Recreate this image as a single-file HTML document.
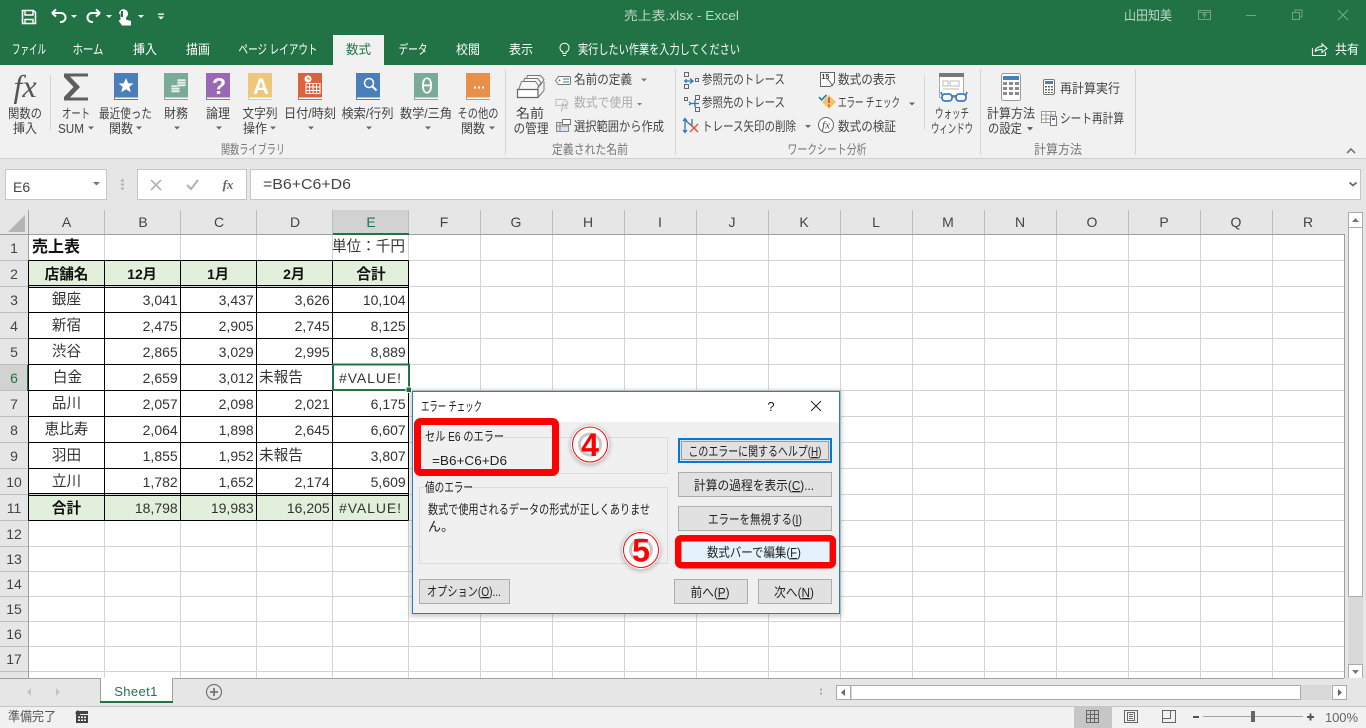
<!DOCTYPE html>
<html lang="ja"><head><meta charset="utf-8"><title>売上表.xlsx - Excel</title>
<style>
html,body{margin:0;padding:0;width:1366px;height:728px;overflow:hidden;background:#e6e6e6}
svg{display:block}
text{font-family:"Liberation Sans","Noto Sans CJK JP",sans-serif;font-size:13px;fill:#444}
.r{font-size:13px;fill:#444}
.g{font-size:13px;fill:#777}
.m{text-anchor:middle}
.e{text-anchor:end}
.tab{font-size:13px;fill:#fff;text-anchor:middle}
.c{font-size:14px;fill:#333}
.j{font-size:14.6px;fill:#333}
.b{font-weight:bold;fill:#111}
.h{font-size:14px;fill:#444;text-anchor:middle}
.d{font-size:13px;fill:#222}
.dm{font-size:13px;fill:#222;text-anchor:middle}
</style></head><body>
<svg width="1366" height="728" viewBox="0 0 1366 728" xmlns="http://www.w3.org/2000/svg">
<defs><filter id="s" x="-30%" y="-30%" width="160%" height="160%"><feGaussianBlur stdDeviation="2"/></filter></defs>
<!-- backgrounds -->
<rect width="1366" height="728" fill="#e6e6e6"/>
<rect width="1366" height="65" fill="#217346"/>
<rect y="65" width="1366" height="93" fill="#f1f1f1"/>
<rect y="158" width="1366" height="1" fill="#d0d0d0"/>
<!-- QAT -->
<g fill="none" stroke="#fff">
<path d="M22.500 10.500h11l2 2v11h-13z" stroke-width="1.600"/>
<path d="M25 11v4h8v-4M25 23.500v-4h8v4" stroke-width="1.400"/>
<path d="M52 13l4-3.500M52 13l4 3.500M52 13h9a4.500 4.500 0 0 1 0 9h-1" stroke-width="2"/>
<path d="M100 13l-4-3.500M100 13l-4 3.500M100 13h-8a4.500 4.500 0 0 0 0 9h1" stroke-width="2"/>
</g>
<g fill="#fff">
<path d="M71 15h6l-3 3zM106 15h6l-3 3zM138 15h6l-3 3z"/>
<path d="M119 14a4.500 4.500 0 1 1 7 3.500v2l5 1.500v4.500h-9l-3.500-5 2-.5V13.500z"/>
<rect x="158" y="13.500" width="6" height="1.300"/><path d="M158 16.500h6l-3 3z"/>
</g>
<rect x="121" y="11" width="2" height="6" fill="#217346"/>
<!-- title -->
<text x="681.500" y="20" class="m" style="font-size:12.500px;fill:#bcd8c8" textLength="115" lengthAdjust="spacingAndGlyphs">売上表.xlsx  -  Excel</text>
<text x="1124" y="20" style="font-size:13px;fill:#bcd8c8" textLength="48" lengthAdjust="spacingAndGlyphs">山田知美</text>
<g fill="none" stroke="#6fa488">
<path d="M1198.500 10.500h12v9h-12zM1198.500 12.500h12M1204.500 18v-4M1202.500 15.500l2-2 2 2"/>
<path d="M1246 15.500h10"/>
<path d="M1292.500 12.500h7v7h-7zM1295 12.500v-2.500h7v7h-2.500"/>
<path d="M1338 10l10 10M1348 10l-10 10" stroke-width="1.200"/>
</g>
<!-- tabs -->
<rect x="333" y="35" width="51" height="30" fill="#f1f1f1"/>
<text x="29" y="54" class="tab" textLength="34" lengthAdjust="spacingAndGlyphs">ファイル</text>
<text x="88" y="54" class="tab" textLength="31" lengthAdjust="spacingAndGlyphs">ホーム</text>
<text x="145" y="54" class="tab" textLength="24" lengthAdjust="spacingAndGlyphs">挿入</text>
<text x="198" y="54" class="tab" textLength="24" lengthAdjust="spacingAndGlyphs">描画</text>
<text x="278" y="54" class="tab" textLength="79" lengthAdjust="spacingAndGlyphs">ページ レイアウト</text>
<text x="358.500" y="54" class="tab" style="fill:#217346" textLength="25" lengthAdjust="spacingAndGlyphs">数式</text>
<text x="413" y="54" class="tab" textLength="29" lengthAdjust="spacingAndGlyphs">データ</text>
<text x="468" y="54" class="tab" textLength="24" lengthAdjust="spacingAndGlyphs">校閲</text>
<text x="521" y="54" class="tab" textLength="24" lengthAdjust="spacingAndGlyphs">表示</text>
<path d="M566 53.500v-1.500a4.500 4.500 0 1 0-3 0v1.500zM563 55.500h3" fill="none" stroke="#fff"/>
<text x="578" y="54" style="font-size:13px;fill:#fff" textLength="162" lengthAdjust="spacingAndGlyphs">実行したい作業を入力してください</text>
<path d="M1312.500 48v7.500h13V52M1315 51c1-3.500 4-4.500 7-4.500V44l5 4.500-5 4v-3c-3 0-5 .5-7 2" fill="none" stroke="#fff" stroke-width="1.100"/>
<text x="1335" y="54" style="font-size:13px;fill:#fff" textLength="24" lengthAdjust="spacingAndGlyphs">共有</text>

<!-- ribbon: function library -->
<text x="25" y="97" class="m" style="font-family:'Liberation Serif',serif;font-style:italic;font-size:32px;fill:#555">fx</text>
<rect x="50" y="75" width="1" height="55" fill="#d4d4d4"/>
<path d="M64 73.500h24v3H70l10 10.500-10 10.500h18v3H64v-3.500l9.500-10-9.500-10z" fill="#5f5f5f"/>
<!-- books -->
<g>
<path d="M114 73h24v26h-24z" fill="#4a7fb9"/><rect x="114" y="99" width="24" height="1" fill="#4a7fb9"/><rect x="115" y="97.500" width="23" height="1.500" fill="#fff"/>
<path d="M126 78l2.200 5.200 5.300.3-4.200 3.400 1.500 5.300-4.800-3-4.800 3 1.500-5.300-4.200-3.400 5.300-.3z" fill="#fff"/>
<path d="M164 73h24v26h-24z" fill="#7aab98"/><rect x="164" y="99" width="24" height="1" fill="#7aab98"/><rect x="165" y="97.500" width="23" height="1.500" fill="#fff"/>
<g fill="#e8efec" stroke="#7aab98" stroke-width=".5"><rect x="171" y="85" width="9" height="2.500" rx="1"/><rect x="171" y="87.500" width="9" height="2.500" rx="1"/><rect x="171" y="90" width="9" height="2.500" rx="1"/><rect x="177" y="79" width="9" height="2.500" rx="1"/><rect x="177" y="81.500" width="9" height="2.500" rx="1"/><rect x="177" y="84" width="9" height="2.500" rx="1"/></g>
<path d="M206 73h24v26h-24z" fill="#9a68b5"/><rect x="206" y="99" width="24" height="1" fill="#9a68b5"/><rect x="207" y="97.500" width="23" height="1.500" fill="#fff"/>
<text x="219" y="94" class="m" style="font-size:23px;font-weight:bold;fill:#fff">?</text>
<path d="M248 73h24v26h-24z" fill="#eec77d"/><rect x="248" y="99" width="24" height="1" fill="#eec77d"/><rect x="249" y="97.500" width="23" height="1.500" fill="#fff"/>
<text x="261" y="94" class="m" style="font-size:22px;font-weight:bold;fill:#fff">A</text>
<path d="M298 73h24v26h-24z" fill="#d9623f"/><rect x="298" y="99" width="24" height="1" fill="#d9623f"/><rect x="299" y="97.500" width="23" height="1.500" fill="#fff"/>
<circle cx="308" cy="79" r="3.500" fill="#fff"/><path d="M308 77v2h2" stroke="#d9623f" fill="none"/>
<path d="M306 83.500h14v10h-14zM306 87h14M306 90.500h14M309.500 83.500v10M313 83.500v10M316.500 83.500v10" fill="none" stroke="#fff"/>
<path d="M356 73h24v26h-24z" fill="#4a7fb9"/><rect x="356" y="99" width="24" height="1" fill="#4a7fb9"/><rect x="357" y="97.500" width="23" height="1.500" fill="#fff"/>
<circle cx="369" cy="83" r="4.500" fill="none" stroke="#fff" stroke-width="1.500"/><path d="M372.500 86.500l4 4" stroke="#fff" stroke-width="2"/>
<path d="M414 73h24v26h-24z" fill="#7aab98"/><rect x="414" y="99" width="24" height="1" fill="#7aab98"/><rect x="415" y="97.500" width="23" height="1.500" fill="#fff"/>
<text x="427" y="93" class="m" style="font-size:20px;fill:#fff;font-family:'DejaVu Sans',sans-serif">θ</text>
<path d="M466 73h24v26h-24z" fill="#e8904a"/><rect x="466" y="99" width="24" height="1" fill="#e8904a"/><rect x="467" y="97.500" width="23" height="1.500" fill="#fff"/>
<path d="M474 86.500h2v2h-2zM478 86.500h2v2h-2zM482 86.500h2v2h-2z" fill="#fff"/>
</g>
<g class="r">
<text x="25" y="118" class="r m" textLength="34" lengthAdjust="spacingAndGlyphs">関数の</text>
<text x="25" y="133" class="r m" textLength="24" lengthAdjust="spacingAndGlyphs">挿入</text>
<text x="76" y="118" class="r m" textLength="28" lengthAdjust="spacingAndGlyphs">オート</text>
<text x="58" y="133" class="r" textLength="26" lengthAdjust="spacingAndGlyphs">SUM</text>
<text x="125.500" y="118" class="r m" textLength="53" lengthAdjust="spacingAndGlyphs">最近使った</text>
<text x="121" y="133" class="r m" textLength="24" lengthAdjust="spacingAndGlyphs">関数</text>
<text x="176" y="118" class="r m" textLength="24" lengthAdjust="spacingAndGlyphs">財務</text>
<text x="218" y="118" class="r m" textLength="24" lengthAdjust="spacingAndGlyphs">論理</text>
<text x="260" y="118" class="r m" textLength="35" lengthAdjust="spacingAndGlyphs">文字列</text>
<text x="255" y="133" class="r m" textLength="24" lengthAdjust="spacingAndGlyphs">操作</text>
<text x="310" y="118" class="r m" textLength="52" lengthAdjust="spacingAndGlyphs">日付/時刻</text>
<text x="367.500" y="118" class="r m" textLength="52" lengthAdjust="spacingAndGlyphs">検索/行列</text>
<text x="426" y="118" class="r m" textLength="52" lengthAdjust="spacingAndGlyphs">数学/三角</text>
<text x="478" y="118" class="r m" textLength="41" lengthAdjust="spacingAndGlyphs">その他の</text>
<text x="473" y="133" class="r m" textLength="24" lengthAdjust="spacingAndGlyphs">関数</text>
</g>
<g fill="#666">
<path d="M88 126.500h6l-3 3zM136 126.500h6l-3 3zM174 126.500h6l-3 3zM216 126.500h6l-3 3zM270 126.500h6l-3 3zM308 126.500h6l-3 3zM366 126.500h6l-3 3zM425 126.500h6l-3 3zM489 126.500h6l-3 3z"/>
<path d="M641 78.500h6l-3 3zM637 103h5l-2.500 2.500z" opacity=".85"/>
<path d="M805 125h6l-3 3zM909 102.500h6l-3 3zM1027 127.500h6l-3 3z"/>
</g>
<text x="253" y="154" class="g m" textLength="64" lengthAdjust="spacingAndGlyphs">関数ライブラリ</text>
<rect x="505" y="69" width="1" height="86" fill="#d6d6d6"/>

<!-- defined names -->
<g fill="#f7f7f7" stroke="#777">
<path d="M527.500 75.500h13l3.500 4-4 6h-16z"/>
<path d="M524.500 78.500h13l3.500 4-3 6h-16z"/>
<path d="M521.500 81.500h14l3 4-1 4.500h-19z"/>
<path d="M517.500 89.500h20.500v8h-20.500z" fill="#fff" stroke="#666" stroke-width="1.200"/>
<path d="M538 97.500l6-7v-9" fill="none"/>
</g>
<text x="530" y="118" class="r m" textLength="28" lengthAdjust="spacingAndGlyphs">名前</text>
<text x="531" y="133" class="r m" textLength="35" lengthAdjust="spacingAndGlyphs">の管理</text>
<path d="M558.500 76.500h11a2 2 0 0 1 1 1v6a2 2 0 0 1-1 1h-11l-3-4z" fill="#fff" stroke="#777"/>
<path d="M563 79h6M563 82h6" stroke="#2d76b8"/><circle cx="559.500" cy="80.500" r="1" fill="#777"/>
<text x="574" y="84" class="r" textLength="58" lengthAdjust="spacingAndGlyphs">名前の定義</text>
<text x="561" y="109" style="font-size:10px;font-style:italic;font-family:'Liberation Serif',serif;fill:#aaa">fx</text>
<path d="M556 99.500h9l3 3-3 3h-9z" fill="none" stroke="#bbb"/>
<text x="574" y="107" style="font-size:13px;fill:#aaa" textLength="59" lengthAdjust="spacingAndGlyphs">数式で使用</text>
<path d="M556.500 122.500h12v9h-12z" fill="#dbe5f0" stroke="#888"/><path d="M560 122.500v9M556.500 126h12" stroke="#888"/><path d="M562.500 119.500h8v5h-8z" fill="#fff" stroke="#777"/>
<text x="574" y="131" class="r" textLength="90" lengthAdjust="spacingAndGlyphs">選択範囲から作成</text>
<text x="590" y="154" class="g m" textLength="76" lengthAdjust="spacingAndGlyphs">定義された名前</text>
<rect x="675" y="69" width="1" height="86" fill="#d6d6d6"/>

<!-- formula auditing -->
<g fill="none" stroke="#666">
<path d="M684.500 72.500h4v4h-4zM684.500 84.500h4v4h-4zM695.500 78.500h3v3h-3z"/>
<path d="M684 81h9M690 78.500l3 2.500-3 2.500M686 79v4" stroke="#2d76b8" stroke-width="1.300"/>
<path d="M684.500 97.500h3v3h-3zM695.500 95.500h4v4h-4zM695.500 107.500h4v4h-4z"/>
<path d="M691 103.500h8M695 100v7M689 102l2 1.500-2 1.500" stroke="#2d76b8" stroke-width="1.300"/>
<path d="M685 119v13M683 121l2-2.500 2 2.500M683 130l2 2.500 2-2.500M685 120l8 7M692 119v7" stroke="#2d76b8" stroke-width="1.300"/>
<path d="M690 124l8 8M698 124l-8 8" stroke="#d9533a" stroke-width="1.400"/>
</g>
<text x="702" y="84" class="r" textLength="83" lengthAdjust="spacingAndGlyphs">参照元のトレース</text>
<text x="702" y="107" class="r" textLength="83" lengthAdjust="spacingAndGlyphs">参照先のトレース</text>
<text x="702" y="131" class="r" textLength="94" lengthAdjust="spacingAndGlyphs">トレース矢印の削除</text>
<path d="M820.500 72.500h14v10l-4 4h-10z" fill="#fff" stroke="#666"/><path d="M827 78l6 8" stroke="#666"/>
<text x="821.500" y="79" style="font-size:7px;fill:#333;font-weight:bold">15</text>
<text x="838" y="84" class="r" textLength="58" lengthAdjust="spacingAndGlyphs">数式の表示</text>
<path d="M819 97l2.500 3 5-5" fill="none" stroke="#2d76b8" stroke-width="1.600"/>
<path d="M829 95l7 7-7 7-7-7z" fill="#f0c36d"/><path d="M829 97.500v5.500M829 104.500v2" stroke="#d9533a" stroke-width="1.800"/>
<text x="838" y="107" class="r" textLength="62" lengthAdjust="spacingAndGlyphs">エラー チェック</text>
<circle cx="826" cy="125" r="7.500" fill="#fff" stroke="#666"/>
<text x="826" y="128.500" class="m" style="font-size:11px;font-style:italic;font-family:'Liberation Serif',serif;fill:#444">fx</text>
<text x="838" y="131" class="r" textLength="58" lengthAdjust="spacingAndGlyphs">数式の検証</text>
<text x="827" y="154" class="g m" textLength="79" lengthAdjust="spacingAndGlyphs">ワークシート分析</text>
<rect x="924" y="75" width="1" height="55" fill="#d8d8d8"/>
<!-- watch window -->
<rect x="939.500" y="73.500" width="24" height="24" fill="#fff" stroke="#aaa"/>
<rect x="939" y="73" width="25" height="4" fill="#777"/>
<path d="M943 81h5v5h-5zM950 81h9v5h-9zM943 89h16" stroke="#bbb" fill="none"/>
<g fill="#f7f7f7" stroke="#3f7cbb" stroke-width="1.700"><rect x="942" y="94" width="10" height="7" rx="3"/><rect x="956" y="94" width="10" height="7" rx="3"/><path d="M952 96h4M942 95l-1-3M966 95l1-3" fill="none"/></g>
<text x="952" y="118" class="r m" textLength="34" lengthAdjust="spacingAndGlyphs">ウォッチ</text>
<text x="952" y="133" class="r m" textLength="42" lengthAdjust="spacingAndGlyphs">ウィンドウ</text>
<rect x="980" y="69" width="1" height="86" fill="#d6d6d6"/>
<!-- calc -->
<rect x="1001.500" y="73.500" width="19" height="27" rx="2" fill="#fff" stroke="#999"/>
<rect x="1003" y="76" width="16" height="4" fill="#4a7fb9"/>
<g fill="#8a8a8a"><rect x="1003" y="82" width="4" height="3"/><rect x="1009" y="82" width="4" height="3"/><rect x="1015" y="82" width="4" height="3"/><rect x="1003" y="87" width="4" height="3"/><rect x="1009" y="87" width="4" height="3"/><rect x="1015" y="87" width="4" height="3"/><rect x="1003" y="92" width="4" height="3"/><rect x="1009" y="92" width="4" height="3"/><rect x="1015" y="92" width="4" height="3"/></g>
<text x="1011" y="118" class="r m" textLength="48" lengthAdjust="spacingAndGlyphs">計算方法</text>
<text x="1005" y="133" class="r m" textLength="34" lengthAdjust="spacingAndGlyphs">の設定</text>
<path d="M1027.500 127h5l-2.500 2.500z" fill="#666"/>
<rect x="1043.500" y="79.500" width="11" height="15" rx="1.500" fill="#fff" stroke="#777"/><rect x="1045" y="81" width="8" height="3" fill="#4a7fb9"/>
<path d="M1045 86h2v1.500h-2zM1048 86h2v1.500h-2zM1051 86h2v1.500h-2zM1045 89h2v1.500h-2zM1048 89h2v1.500h-2zM1051 89h2v1.500h-2zM1045 92h2v1h-2zM1048 92h2v1h-2zM1051 92h2v1h-2z" fill="#666"/>
<text x="1060" y="93" class="r" textLength="60" lengthAdjust="spacingAndGlyphs">再計算実行</text>
<path d="M1041.500 111.500h14v11h-14zM1041.500 115h14M1041.500 119h14M1046 111.500v11M1051 111.500v11" fill="#fff" stroke="#999"/>
<rect x="1050.500" y="116.500" width="6" height="9" fill="#fff" stroke="#777"/><rect x="1052" y="118" width="3" height="2" fill="#4a7fb9"/>
<text x="1060" y="123" class="r" textLength="64" lengthAdjust="spacingAndGlyphs">シート再計算</text>
<text x="1058" y="154" class="g m" textLength="48" lengthAdjust="spacingAndGlyphs">計算方法</text>
<rect x="1135" y="69" width="1" height="86" fill="#d6d6d6"/>
<path d="M1347 153l4-4 4 4" fill="none" stroke="#777" stroke-width="1.600"/>

<!-- formula bar -->
<rect x="5.500" y="169.500" width="101" height="30" fill="#fff" stroke="#c6c6c6"/>
<text x="13" y="192" style="font-size:14px;fill:#444">E6</text>
<path d="M93 182h7l-3.500 3.500z" fill="#777"/>
<path d="M121 179.500h3v2h-3zM121 183.500h3v2h-3zM121 187.500h3v2h-3z" fill="#b0b0b0"/>
<rect x="137.500" y="169.500" width="109" height="30" fill="#fff" stroke="#c6c6c6"/>
<path d="M151 180l10 10M161 180l-10 10" stroke="#b4b4b4" stroke-width="1.700" fill="none"/>
<path d="M187 185l4 4 7-9" stroke="#b4b4b4" stroke-width="2.200" fill="none"/>
<text x="228" y="189" class="m" style="font-family:'Liberation Serif',serif;font-style:italic;font-size:13px;font-weight:bold;fill:#666">fx</text>
<rect x="250.500" y="169.500" width="1110" height="30" fill="#fff" stroke="#c6c6c6"/>
<text x="263" y="189" style="font-size:14.500px;fill:#444" textLength="88" lengthAdjust="spacingAndGlyphs">=B6+C6+D6</text>
<path d="M1349.500 182.500l3.500 3 3.500-3" fill="none" stroke="#666" stroke-width="1.800"/>

<!-- sheet -->
<rect x="29" y="235" width="1315" height="443" fill="#fff"/>
<rect x="333" y="210" width="76" height="24" fill="#d2d2d2"/>
<rect x="0" y="365" width="28" height="26" fill="#d2d2d2"/>
<path d="M8 232h17v-17z" fill="#b4b4b4"/>
<!-- header separators -->
<path d="M28.500 210v25M104.500 210v25M180.500 210v25M256.500 210v25M332.500 210v25M408.500 210v25M480.500 210v25M552.500 210v25M624.500 210v25M696.500 210v25M768.500 210v25M840.500 210v25M912.500 210v25M984.500 210v25M1056.500 210v25M1128.500 210v25M1200.500 210v25M1272.500 210v25" stroke="#bdbdbd"/>
<path d="M0 260.500h28M0 286.500h28M0 312.500h28M0 338.500h28M0 364.500h28M0 390.500h28M0 416.500h28M0 442.500h28M0 468.500h28M0 494.500h28M0 520.500h28M0 546.500h28M0 571.500h28M0 596.500h28M0 621.500h28M0 646.500h28M0 671.500h28" stroke="#bdbdbd"/>
<!-- gridlines -->
<path d="M104.500 235V678M180.500 235V678M256.500 235V678M332.500 235V678M408.500 235V678M480.500 235V678M552.500 235V678M624.500 235V678M696.500 235V678M768.500 235V678M840.500 235V678M912.500 235V678M984.500 235V678M1056.500 235V678M1128.500 235V678M1200.500 235V678M1272.500 235V678" stroke="#d4d4d4"/>
<path d="M29 260.500H1344M29 286.500H1344M29 312.500H1344M29 338.500H1344M29 364.500H1344M29 390.500H1344M29 416.500H1344M29 442.500H1344M29 468.500H1344M29 494.500H1344M29 520.500H1344M29 546.500H1344M29 571.500H1344M29 596.500H1344M29 621.500H1344M29 646.500H1344M29 671.500H1344" stroke="#d4d4d4"/>
<path d="M28.500 210V678M0 234.500H1344M1344.500 234V678" stroke="#9f9f9f"/>
<rect x="333" y="233" width="76" height="2" fill="#217346"/>
<rect x="27" y="365" width="2" height="26" fill="#217346"/>
<!-- table -->
<rect x="29" y="261" width="380" height="24" fill="#e2efda"/>
<rect x="29" y="495" width="380" height="25" fill="#e2efda"/>
<path d="M28.500 260.500V520.500M104.500 260.500V520.500M180.500 260.500V520.500M256.500 260.500V520.500M332.500 260.500V520.500M408.500 260.500V520.500M28.500 260.500H408.500M28.500 285.500H408.500M28.500 287.500H408.500M28.500 312.500H408.500M28.500 338.500H408.500M28.500 364.500H408.500M28.500 390.500H408.500M28.500 416.500H408.500M28.500 442.500H408.500M28.500 468.500H408.500M28.500 493.500H408.500M28.500 495.500H408.500M28.500 520.500H408.500" stroke="#000" fill="none"/>
<!-- headers -->
<g class="h">
<text x="66.500" y="227" class="h">A</text><text x="143" y="227" class="h">B</text><text x="219" y="227" class="h">C</text><text x="295" y="227" class="h">D</text><text x="371" y="227" class="h" style="fill:#217346">E</text>
<text x="444" y="227" class="h">F</text><text x="516" y="227" class="h">G</text><text x="588" y="227" class="h">H</text><text x="660" y="227" class="h">I</text><text x="732" y="227" class="h">J</text><text x="804" y="227" class="h">K</text><text x="876" y="227" class="h">L</text><text x="948" y="227" class="h">M</text><text x="1020" y="227" class="h">N</text><text x="1092" y="227" class="h">O</text><text x="1164" y="227" class="h">P</text><text x="1236" y="227" class="h">Q</text><text x="1308" y="227" class="h">R</text>
<text x="14" y="253" class="h">1</text><text x="14" y="279" class="h">2</text><text x="14" y="305" class="h">3</text><text x="14" y="331" class="h">4</text><text x="14" y="357" class="h">5</text><text x="14" y="383" class="h" style="fill:#217346">6</text><text x="14" y="409" class="h">7</text><text x="14" y="435" class="h">8</text><text x="14" y="461" class="h">9</text><text x="14" y="487" class="h">10</text><text x="14" y="513" class="h">11</text><text x="14" y="539" class="h">12</text><text x="14" y="564" class="h">13</text><text x="14" y="589" class="h">14</text><text x="14" y="614" class="h">15</text><text x="14" y="639" class="h">16</text><text x="14" y="664" class="h">17</text>
</g>
<!-- cells -->
<text x="32" y="252" class="j b" style="font-size:16px">売上表</text>
<text x="405" y="251" class="j e">単位：千円</text>
<text x="66.500" y="279" class="j b m">店舗名</text><text x="142" y="279" class="c b m">12月</text><text x="218" y="279" class="c b m">1月</text><text x="294" y="279" class="c b m">2月</text><text x="371" y="279" class="j b m">合計</text>
<text x="66.500" y="513" class="j b m">合計</text>
<text x="66.500" y="304" class="j m">銀座</text><text x="66.500" y="330" class="j m">新宿</text><text x="66.500" y="356" class="j m">渋谷</text><text x="67.500" y="382" class="j m">白金</text><text x="66.500" y="408" class="j m">品川</text><text x="66.500" y="434" class="j m">恵比寿</text><text x="66.500" y="460" class="j m">羽田</text><text x="66.500" y="486" class="j m">立川</text>
<text x="177.700" y="305" class="c e">3,041</text><text x="253.700" y="305" class="c e">3,437</text><text x="329.700" y="305" class="c e">3,626</text><text x="405.700" y="305" class="c e">10,104</text>
<text x="177.700" y="331" class="c e">2,475</text><text x="253.700" y="331" class="c e">2,905</text><text x="329.700" y="331" class="c e">2,745</text><text x="405.700" y="331" class="c e">8,125</text>
<text x="177.700" y="357" class="c e">2,865</text><text x="253.700" y="357" class="c e">3,029</text><text x="329.700" y="357" class="c e">2,995</text><text x="405.700" y="357" class="c e">8,889</text>
<text x="177.700" y="383" class="c e">2,659</text><text x="253.700" y="383" class="c e">3,012</text><text x="259" y="382" class="j">未報告</text>
<text x="177.700" y="409" class="c e">2,057</text><text x="253.700" y="409" class="c e">2,098</text><text x="329.700" y="409" class="c e">2,021</text><text x="405.700" y="409" class="c e">6,175</text>
<text x="177.700" y="435" class="c e">2,064</text><text x="253.700" y="435" class="c e">1,898</text><text x="329.700" y="435" class="c e">2,645</text><text x="405.700" y="435" class="c e">6,607</text>
<text x="177.700" y="461" class="c e">1,855</text><text x="253.700" y="461" class="c e">1,952</text><text x="259" y="460" class="j">未報告</text><text x="405.700" y="461" class="c e">3,807</text>
<text x="177.700" y="487" class="c e">1,782</text><text x="253.700" y="487" class="c e">1,652</text><text x="329.700" y="487" class="c e">2,174</text><text x="405.700" y="487" class="c e">5,609</text>
<text x="177.700" y="513" class="c e">18,798</text><text x="253.700" y="513" class="c e">19,983</text><text x="329.700" y="513" class="c e">16,205</text><text x="370" y="513" class="c m" textLength="62" lengthAdjust="spacing">#VALUE!</text>
<text x="370" y="383" class="c m" textLength="62" lengthAdjust="spacing">#VALUE!</text>
<!-- selection -->
<rect x="333" y="364.500" width="76" height="25.500" fill="none" stroke="#217346" stroke-width="2"/>
<rect x="406" y="387" width="5.500" height="5.500" fill="#217346" stroke="#fff" stroke-width="1"/>

<!-- v scroll -->
<rect x="1345" y="210" width="21" height="468" fill="#e6e6e6"/>
<rect x="1348" y="228" width="15" height="450" fill="#d9d9d9"/>
<rect x="1348.500" y="212.500" width="14" height="15" fill="#fff" stroke="#ababab"/>
<path d="M1352 222h7l-3.500-4z" fill="#777"/>
<rect x="1348.500" y="227.500" width="14" height="369" fill="#fff" stroke="#ababab"/>
<rect x="1348.500" y="664.500" width="14" height="14" fill="#fff" stroke="#ababab"/>
<path d="M1352 670h7l-3.500 4z" fill="#777"/>

<!-- tab strip -->
<rect y="678" width="1366" height="28" fill="#e6e6e6"/>
<path d="M0 678.500H100.500M173.500 678.500H1344" stroke="#9f9f9f"/>
<rect x="100" y="678" width="73" height="25" fill="#fff"/>
<path d="M100.500 678v25M172.500 678v25" stroke="#9f9f9f"/>
<rect x="100" y="701" width="73" height="2" fill="#217346"/>
<text x="136" y="696" class="m" style="font-size:13px;fill:#217346;letter-spacing:.4px">Sheet1</text>
<path d="M31 688v8l-4-4zM56 688v8l4-4z" fill="#c4c4c4"/>
<circle cx="214" cy="692" r="7.500" fill="none" stroke="#777" stroke-width="1.200"/>
<path d="M210 692h8M214 688v8" stroke="#777" stroke-width="1.800"/>
<path d="M820 688.500h2v2h-2zM820 692.500h2v2h-2z" fill="#aaa"/>
<!-- h scroll -->
<rect x="836" y="685" width="495" height="15" fill="#d9d9d9"/>
<rect x="836.500" y="685.500" width="14" height="14" fill="#fff" stroke="#ababab"/>
<path d="M845 689v7l-4-3.500z" fill="#666"/>
<rect x="851" y="685.500" width="449.500" height="14" fill="#fff" stroke="#ababab"/>
<rect x="1332.500" y="685.500" width="14" height="14" fill="#fff" stroke="#ababab"/>
<path d="M1338 689v7l4-3.500z" fill="#666"/>

<!-- status bar -->
<rect y="706" width="1366" height="22" fill="#f1f1f1"/>
<rect y="706" width="1366" height="1" fill="#c6c6c6"/>
<text x="8" y="721" style="font-size:13px;fill:#555" textLength="48" lengthAdjust="spacingAndGlyphs">準備完了</text>
<circle cx="78" cy="713" r="2.500" fill="#444"/>
<path d="M80 711h8v3h-8zM76 715h12v8H76z" fill="#444"/><path d="M78 716.500h2v1.500h-2zM81 716.500h2v1.500h-2zM84 716.500h2v1.500h-2zM78 719.500h2v1.500h-2zM81 719.500h2v1.500h-2zM84 719.500h2v1.500h-2z" fill="#fff"/>
<rect x="1074" y="707" width="38" height="21" fill="#c6c6c6"/>
<path d="M1086.500 710.500h12v12h-12zM1086.500 714.500h12M1086.500 718.500h12M1090.500 710.500v12M1094.500 710.500v12" fill="none" stroke="#666"/>
<path d="M1124.500 710.500h13v12h-13z" fill="none" stroke="#666"/><path d="M1127.500 712.500h7v8h-7zM1129 714.500h4M1129 716.500h4M1129 718.500h4" fill="none" stroke="#666"/>
<path d="M1162.500 710.500h13v12h-13zM1162.500 718.500h8v-8" fill="none" stroke="#666"/>
<rect x="1193" y="716" width="6" height="2" fill="#555"/>
<rect x="1203" y="716" width="100" height="1" fill="#a0a0a0"/>
<rect x="1251" y="711" width="4" height="11" fill="#666"/>
<path d="M1307 717h7M1310.500 713.500v7" stroke="#555" stroke-width="2"/>
<text x="1325" y="722" style="font-size:13px;fill:#666" textLength="33">100%</text>

<!-- dialog -->
<rect x="410" y="390" width="432" height="227" fill="#000" opacity=".18" filter="url(#s)"/>
<rect x="412.500" y="391.500" width="427" height="222" fill="#f0f0f0" stroke="#2b7cc0"/>
<rect x="413" y="392" width="426" height="30" fill="#fff"/>
<text x="421" y="411" class="d" textLength="61" lengthAdjust="spacingAndGlyphs">エラー チェック</text>
<text x="771" y="411" class="dm" style="font-size:13px">?</text>
<path d="M811 401l10 10M821 401l-10 10" stroke="#222" fill="none"/>
<rect x="419.500" y="437.500" width="248" height="36" fill="none" stroke="#dcdcdc"/>
<rect x="419.500" y="487.500" width="248" height="76" fill="none" stroke="#dcdcdc"/>
<rect x="424" y="482" width="46" height="12" fill="#f0f0f0"/>
<text x="425" y="441" class="d" textLength="79" lengthAdjust="spacingAndGlyphs">セル E6 のエラー</text>
<text x="432" y="465" class="d" textLength="75" lengthAdjust="spacingAndGlyphs">=B6+C6+D6</text>
<text x="425" y="492" class="d" textLength="48" lengthAdjust="spacingAndGlyphs">値のエラー</text>
<text x="428" y="514" class="d" textLength="222" lengthAdjust="spacingAndGlyphs">数式で使用されるデータの形式が正しくありませ</text>
<text x="428" y="531" class="d">ん。</text>
<g fill="#e1e1e1" stroke="#adadad">
<rect x="680" y="440" width="150" height="21" stroke="none"/>
<rect x="678.500" y="472.500" width="153" height="24"/>
<rect x="678.500" y="506.500" width="153" height="24"/>
<rect x="419.500" y="579.500" width="90" height="24"/>
<rect x="674.500" y="579.500" width="73" height="24"/>
<rect x="758.500" y="579.500" width="73" height="24"/>
</g>
<rect x="679" y="439" width="152" height="23" fill="none" stroke="#0078d7" stroke-width="2"/>
<rect x="681.500" y="441.500" width="147" height="18" fill="none" stroke="#555" stroke-dasharray="1 1"/>
<rect x="680" y="539" width="151" height="26" fill="#e5f1fb"/>
<text x="755" y="456" class="dm" textLength="133" lengthAdjust="spacingAndGlyphs">このエラーに関するヘルプ(<tspan text-decoration="underline">H</tspan>)</text>
<text x="754" y="490" class="dm" textLength="120" lengthAdjust="spacingAndGlyphs">計算の過程を表示(<tspan text-decoration="underline">C</tspan>)...</text>
<text x="755" y="524" class="dm" textLength="94" lengthAdjust="spacingAndGlyphs">エラーを無視する(<tspan text-decoration="underline">I</tspan>)</text>
<text x="754" y="557" class="dm" textLength="94" lengthAdjust="spacingAndGlyphs">数式バーで編集(<tspan text-decoration="underline">F</tspan>)</text>
<text x="464" y="596" class="dm" textLength="74" lengthAdjust="spacingAndGlyphs">オプション(<tspan text-decoration="underline">O</tspan>)...</text>
<text x="710" y="597" class="dm" textLength="39" lengthAdjust="spacingAndGlyphs">前へ(<tspan text-decoration="underline">P</tspan>)</text>
<text x="794" y="597" class="dm" textLength="40" lengthAdjust="spacingAndGlyphs">次へ(<tspan text-decoration="underline">N</tspan>)</text>
<!-- red highlights -->
<rect x="417.500" y="421.500" width="138" height="51" rx="3" fill="none" stroke="#f00" stroke-width="7"/>
<rect x="678.200" y="538.200" width="154.600" height="27" rx="3" fill="none" stroke="#f00" stroke-width="6.500"/>
<g>
<circle cx="590" cy="445.500" r="20" fill="#000" opacity=".22" filter="url(#s)"/>
<circle cx="590" cy="444.500" r="19" fill="#fff"/>
<circle cx="590" cy="444.500" r="17.500" fill="#fff" stroke="#f00"/>
<circle cx="590" cy="444.500" r="10.500" fill="none" stroke="#c8c8c8" stroke-width="3"/>
<text x="590" y="456" class="m" style="font-size:32px;font-weight:bold;fill:#f00">4</text>
<circle cx="641" cy="551" r="20" fill="#000" opacity=".22" filter="url(#s)"/>
<circle cx="641" cy="550" r="19" fill="#fff"/>
<circle cx="641" cy="550" r="17.500" fill="#fff" stroke="#f00"/>
<circle cx="641" cy="550" r="10.500" fill="none" stroke="#c8c8c8" stroke-width="3"/>
<text x="641" y="561.500" class="m" style="font-size:32px;font-weight:bold;fill:#f00">5</text>
</g>
</svg>
</body></html>
